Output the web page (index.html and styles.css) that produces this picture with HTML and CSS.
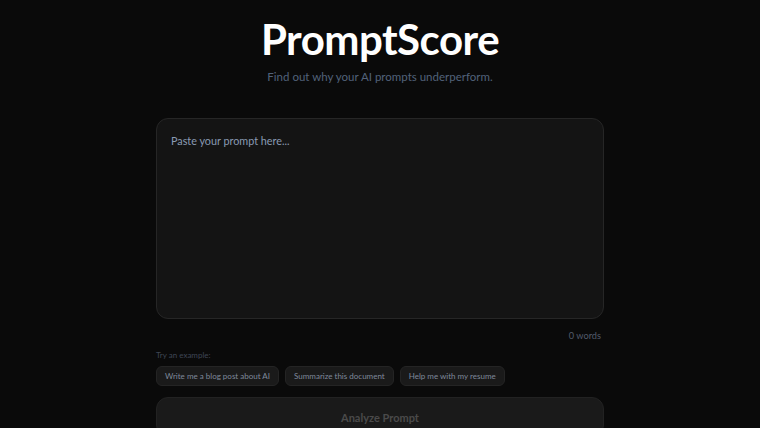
FILE: index.html
```html
<html>
<head>
    <title>PromptScore</title>
    <link rel="stylesheet" href="styles.css">
</head>
<body>
    <div class="container">
        <header class="hero">
            <h1>PromptScore</h1>
            <p class="tagline">Find out why your AI prompts underperform.</p>
        </header>

        <textarea class="prompt-input" placeholder="Paste your prompt here..."></textarea>
        <div class="word-count">0 words</div>

        <div class="examples">
            <span class="examples-label">Try an example:</span>
            <div class="chips">
                <button class="chip">Write me a blog post about AI</button>
                <button class="chip">Summarize this document</button>
                <button class="chip">Help me with my resume</button>
            </div>
        </div>

        <button class="btn" disabled>Analyze Prompt</button>
    </div>
</body>
</html>
```

FILE: styles.css
```css
body {
    margin: 0;
    background-color: #0a0a0a;
    font-family: Lato, "Open Sans", Arial, sans-serif;
    color: #e5e5e5;
}
.container {
    max-width: 448px;
    margin: 0 auto;
    padding-top: 15px;
}
.hero {
    text-align: center;
    margin-bottom: 35px;
}
h1 {
    margin: 0;
    font-size: 42px;
    font-weight: 700;
    letter-spacing: -0.5px;
    line-height: 48px;
    color: #ffffff;
}
.tagline {
    margin: 7px 0 0;
    font-size: 11.5px;
    color: #52627a;
}
.prompt-input {
    display: block;
    width: 100%;
    height: 201px;
    box-sizing: border-box;
    padding: 15px 14px;
    background-color: #141414;
    border: 1px solid #262626;
    border-radius: 12px;
    color: #e5e5e5;
    font-family: inherit;
    font-size: 10.8px;
    resize: none;
    outline: none;
}
.prompt-input::placeholder {
    color: #8a9bb3;
}
.word-count {
    text-align: right;
    font-size: 9.2px;
    color: #525b6b;
    margin-top: 11px;
    padding-right: 3px;
}
.examples {
    margin-top: 9px;
}
.examples-label {
    display: block;
    font-size: 8px;
    color: #3f4655;
    margin-bottom: 6px;
}
.chips {
    display: flex;
    gap: 6px;
}
.chip {
    background-color: #1a1a1a;
    border: 1px solid #242424;
    border-radius: 6px;
    color: #7f899a;
    font-family: inherit;
    font-size: 8px;
    padding: 0 8px;
    height: 20px;
}
.btn {
    display: block;
    width: 100%;
    margin-top: 11px;
    height: 40px;
    background-color: #1a1a1a;
    border: 1px solid #222222;
    border-radius: 12px;
    color: #4a4a4a;
    font-family: inherit;
    font-size: 11px;
    font-weight: 700;
}
```
